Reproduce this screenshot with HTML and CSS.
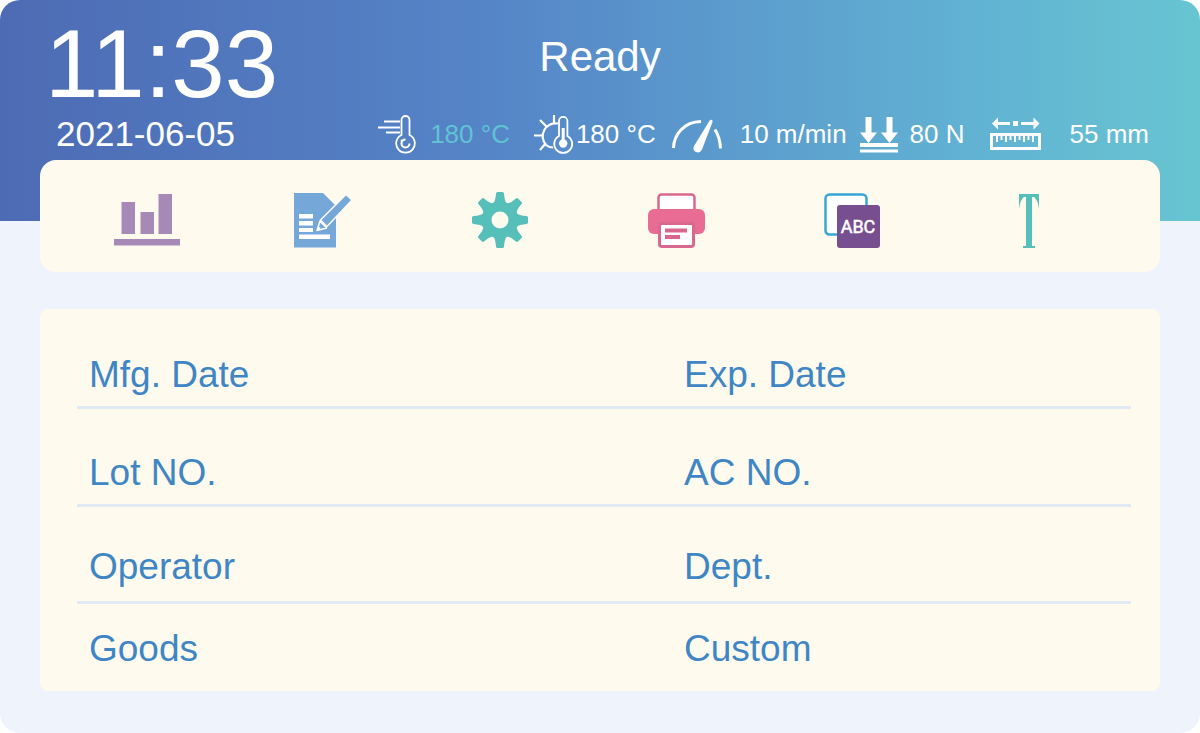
FILE: index.html
```html
<!DOCTYPE html>
<html lang="en">
<head>
<meta charset="utf-8">
<meta name="viewport" content="width=device-width, initial-scale=1">
<title>Sealer control panel</title>
<link rel="stylesheet" href="styles.css">
</head>
<body>
<div class="screen">
  <header class="header">
    <div class="headline">
      <time class="clock">11:33</time>
      <h1 class="state">Ready</h1>
    </div>
    <div class="status">
      <time class="date">2021-06-05</time>
      <ul class="readings">
        <li class="reading actual">
          <svg width="38" height="40" viewBox="0 0 38 40" fill="none" stroke="#fff" stroke-width="2" aria-hidden="true">
            <path d="M6 7.500h16M0 13.500h22M8 18.500h14" stroke-width="1.800"/>
            <path d="M23.500 21V6a4 4 0 0 1 8 0v15a9.300 9.300 0 1 1-8 0z" stroke-width="1.800"/>
            <path d="M27.500 25.500a4 4 0 1 0 4 4M24 27l-1-1" stroke-width="2"/>
          </svg>
          <span>180 °C</span>
        </li>
        <li class="reading target">
          <svg width="40" height="40" viewBox="0 0 40 40" fill="none" stroke="#fff" stroke-width="2.200" aria-hidden="true">
            <path d="M24 9.500A13 13 0 0 0 12 31q3 2.500 7 2.500M20 9V1M12 12L6 6M9 21.500H0M12 29l-6 7"/>
            <path d="M25 22V7a4.200 4.200 0 0 1 8.400 0v15a9 9 0 1 1-8.400 0z" stroke-width="1.800"/>
            <path d="M29.200 14v14" stroke-width="3"/>
            <circle cx="29.200" cy="29.500" r="4.200" fill="#fff" stroke="none"/>
          </svg>
          <span>180 °C</span>
        </li>
        <li class="reading speed">
          <svg width="50" height="40" viewBox="0 0 50 40" aria-hidden="true">
            <path d="M1.500 34C2 20 12 8 29 7.500M43 15.500q5 8 5.500 19" fill="none" stroke="#fff" stroke-width="3"/>
            <path d="M38 6q3-1 2.500 2L30 35.500q-2 4-6 2.500-4-2-2-6z" fill="#fff"/>
          </svg>
          <span>10 m/min</span>
        </li>
        <li class="reading force">
          <svg width="38" height="40" viewBox="0 0 38 40" fill="#fff" aria-hidden="true">
            <path d="M5.500 3h6v15.500H17L8.500 29 0 18.500h5.500zM26.500 3h6v15.500H38L29.500 29 21 18.500h5.500zM0 29h38v4H0zM0 35.500h38v3H0z"/>
          </svg>
          <span>80 N</span>
        </li>
        <li class="reading length">
          <svg width="51" height="40" viewBox="0 0 51 40" aria-hidden="true">
            <path d="M2 9.500l6-6V8h12v3H8v4.500zM23 7h5v5h-5zM49.500 9.500l-6-6V8H31v3h12.500v4.500z" fill="#fff"/>
            <path d="M1.500 20.500h48v14h-48z" fill="none" stroke="#fff" stroke-width="3"/>
            <path d="M7 20v8M11.500 20v6M16 20v8M20.500 20v6M25 20v8M29.500 20v6M34 20v8M38.500 20v6M43 20v8" stroke="#fff" stroke-width="2"/>
          </svg>
          <span>55 mm</span>
        </li>
      </ul>
    </div>
  </header>

  <nav class="toolbar" aria-label="Functions">
    <button class="tool" type="button" aria-label="Statistics">
      <svg width="66" height="60" viewBox="0 0 66 60" fill="#a789b8" aria-hidden="true">
        <path d="M7.500 12h13.500v32H7.500zM26.500 22h13.500v22H26.500zM44.500 4h13.500v40H44.500zM0 49h66v6.500H0z"/>
      </svg>
    </button>
    <button class="tool" type="button" aria-label="Edit">
      <svg width="58" height="60" viewBox="0 0 58 60" aria-hidden="true">
        <path d="M0 3h29l13 13v41.500H0z" fill="#76a7d9"/>
        <path d="M5 24h14v4.500H5zM5 31h14v4.500H5zM5 38h14v4H5zM5 44.500h31V49H5z" fill="#fff"/>
        <path d="M26.500 30L52 4.500l6 5.500-25 26.500z" fill="#76a7d9" stroke="#fffaee" stroke-width="1.500"/>
        <path d="M26 31l6.500 7-9.500 2.500zM23 40.500l3-3" fill="#76a7d9" stroke="#fff" stroke-width="1.500" stroke-linejoin="round"/>
      </svg>
    </button>
    <button class="tool" type="button" aria-label="Settings">
      <svg width="56" height="60" viewBox="-28 -30 56 60" aria-hidden="true">
        <defs><path id="tooth" d="M-7-16Q-4.500-19-4-26.500Q-3.900-28-2.500-28h5Q3.900-28 4-26.500Q4.500-19 7-16z"/></defs>
        <g fill="#57bfb9">
          <circle r="13.500" fill="none" stroke="#57bfb9" stroke-width="10"/>
          <use href="#tooth"/><use href="#tooth" transform="rotate(45)"/><use href="#tooth" transform="rotate(90)"/><use href="#tooth" transform="rotate(135)"/>
          <use href="#tooth" transform="rotate(180)"/><use href="#tooth" transform="rotate(225)"/><use href="#tooth" transform="rotate(270)"/><use href="#tooth" transform="rotate(315)"/>
        </g>
      </svg>
    </button>
    <button class="tool" type="button" aria-label="Print">
      <svg width="57" height="60" viewBox="0 0 57 60" aria-hidden="true">
        <rect x="10.500" y="4.500" width="36" height="26" rx="3" fill="#fff" stroke="#d9688f" stroke-width="2.500"/>
        <rect x="0" y="19" width="57" height="25" rx="6" fill="#e86c94"/>
        <rect x="11.500" y="33.500" width="34" height="23" rx="2.500" fill="#fff" stroke="#d9688f" stroke-width="3"/>
        <path d="M17 38.500h22v4H17zM17 45h15v4H17z" fill="#d9688f"/>
      </svg>
    </button>
    <button class="tool" type="button" aria-label="Characters">
      <svg width="56" height="60" viewBox="0 0 56 60" aria-hidden="true">
        <rect x="1.500" y="4.500" width="41" height="40" rx="4" fill="#fff" stroke="#36a6da" stroke-width="2.500"/>
        <rect x="13" y="15" width="43" height="43" rx="3" fill="#774f91"/>
        <text class="abc" x="34" y="43" text-anchor="middle">ABC</text>
      </svg>
    </button>
    <button class="tool" type="button" aria-label="Text">
      <svg width="22" height="60" viewBox="0 0 22 60" aria-hidden="true">
        <rect x="1" y="4" width="20" height="3" fill="#57bfb9"/>
        <rect x="8" y="4" width="6" height="53" fill="#57bfb9"/>
        <rect x="5" y="56" width="12" height="2" fill="#57bfb9"/>
        <path d="M1 5h7Q2 9 1 19zM21 5h-7q6 4 7 14z" fill="#57bfb9"/>
      </svg>
    </button>
  </nav>

  <main class="form">
    <div class="row">
      <label class="field">Mfg. Date <input class="entry" type="text"></label>
      <label class="field">Exp. Date <input class="entry" type="text"></label>
    </div>
    <div class="row">
      <label class="field">Lot NO. <input class="entry" type="text"></label>
      <label class="field">AC NO. <input class="entry" type="text"></label>
    </div>
    <div class="row">
      <label class="field">Operator <input class="entry" type="text"></label>
      <label class="field">Dept. <input class="entry" type="text"></label>
    </div>
    <div class="row">
      <label class="field">Goods <input class="entry" type="text"></label>
      <label class="field">Custom <input class="entry" type="text"></label>
    </div>
  </main>
</div>
</body>
</html>
```

FILE: styles.css
```css
* { box-sizing: border-box; }

body {
  margin: 0;
  background: #fff;
  font-family: "Liberation Sans", Arial, sans-serif;
}

.screen {
  min-height: 100vh;
  padding: 0 40px 42px;
  border-radius: 20px;
  background:
    linear-gradient(90deg, #4d6bb4 0%, #5584c7 40%, #61b1d3 80%, #67c5d1 100%) 0 0 / 100% 221px no-repeat,
    #eff4fc;
}

.header {
  height: 160px;
  color: #fff;
}

.headline {
  display: grid;
  grid-template-columns: 1fr auto 1fr;
  height: 114px;
}

.clock {
  padding: 14px 0 0 5px;
  font-size: 96px;
  line-height: 100px;
}

.state {
  margin: 0;
  padding-top: 33px;
  font-size: 42px;
  font-weight: 400;
  line-height: 48px;
}

.status {
  display: flex;
  align-items: center;
  justify-content: space-between;
  height: 40px;
  padding: 0 11px 0 16px;
}

.date {
  font-size: 35px;
  line-height: 40px;
}

.readings {
  display: flex;
  margin: 0;
  padding: 0;
  list-style: none;
}

.reading {
  display: flex;
  align-items: center;
  font-size: 26px;
  line-height: 38px;
  white-space: nowrap;
}

.reading svg { flex: none; }

.actual { gap: 14px; margin-right: 24px; }
.actual span { color: #5fc3d3; }
.target { gap: 2px; margin-right: 16px; }
.speed { gap: 18px; margin-right: 13px; }
.force { gap: 12px; margin-right: 25px; }
.length { gap: 29px; }

.toolbar {
  display: grid;
  grid-template-columns: repeat(6, 1fr);
  height: 112px;
  padding: 0 43px 0 19px;
  border-radius: 16px;
  background: #fefaee;
}

.tool {
  display: flex;
  align-items: center;
  justify-content: center;
  padding: 8px 0 0;
  border: 0;
  background: none;
  cursor: pointer;
}

.tool svg { display: block; }

.abc {
  fill: #fff;
  stroke: #fff;
  stroke-width: 0.5px;
  font-family: "Liberation Sans Narrow", Roboto, sans-serif;
  font-size: 18px;
}

.form {
  margin-top: 37px;
  padding: 2px 29px 0 37px;
  border-radius: 8px;
  background: #fefaee;
}

.row {
  display: grid;
  grid-template-columns: minmax(0, 595fr) minmax(0, 447fr);
  align-items: end;
  height: 98px;
  padding: 0 0 9px 12px;
  border-bottom: 3px solid #e0eaf2;
}

.row:nth-child(3) {
  height: 97px;
  padding-bottom: 12px;
}

.row:last-child {
  height: 87px;
  padding-bottom: 20px;
  border-bottom: 0;
}

.field {
  display: flex;
  gap: 12px;
  color: #3f86c4;
  font-size: 37px;
  line-height: 44px;
  white-space: nowrap;
}

.entry {
  flex: 1;
  min-width: 0;
  padding: 0;
  border: 0;
  outline: 0;
  background: none;
  color: inherit;
  font: inherit;
}
```
